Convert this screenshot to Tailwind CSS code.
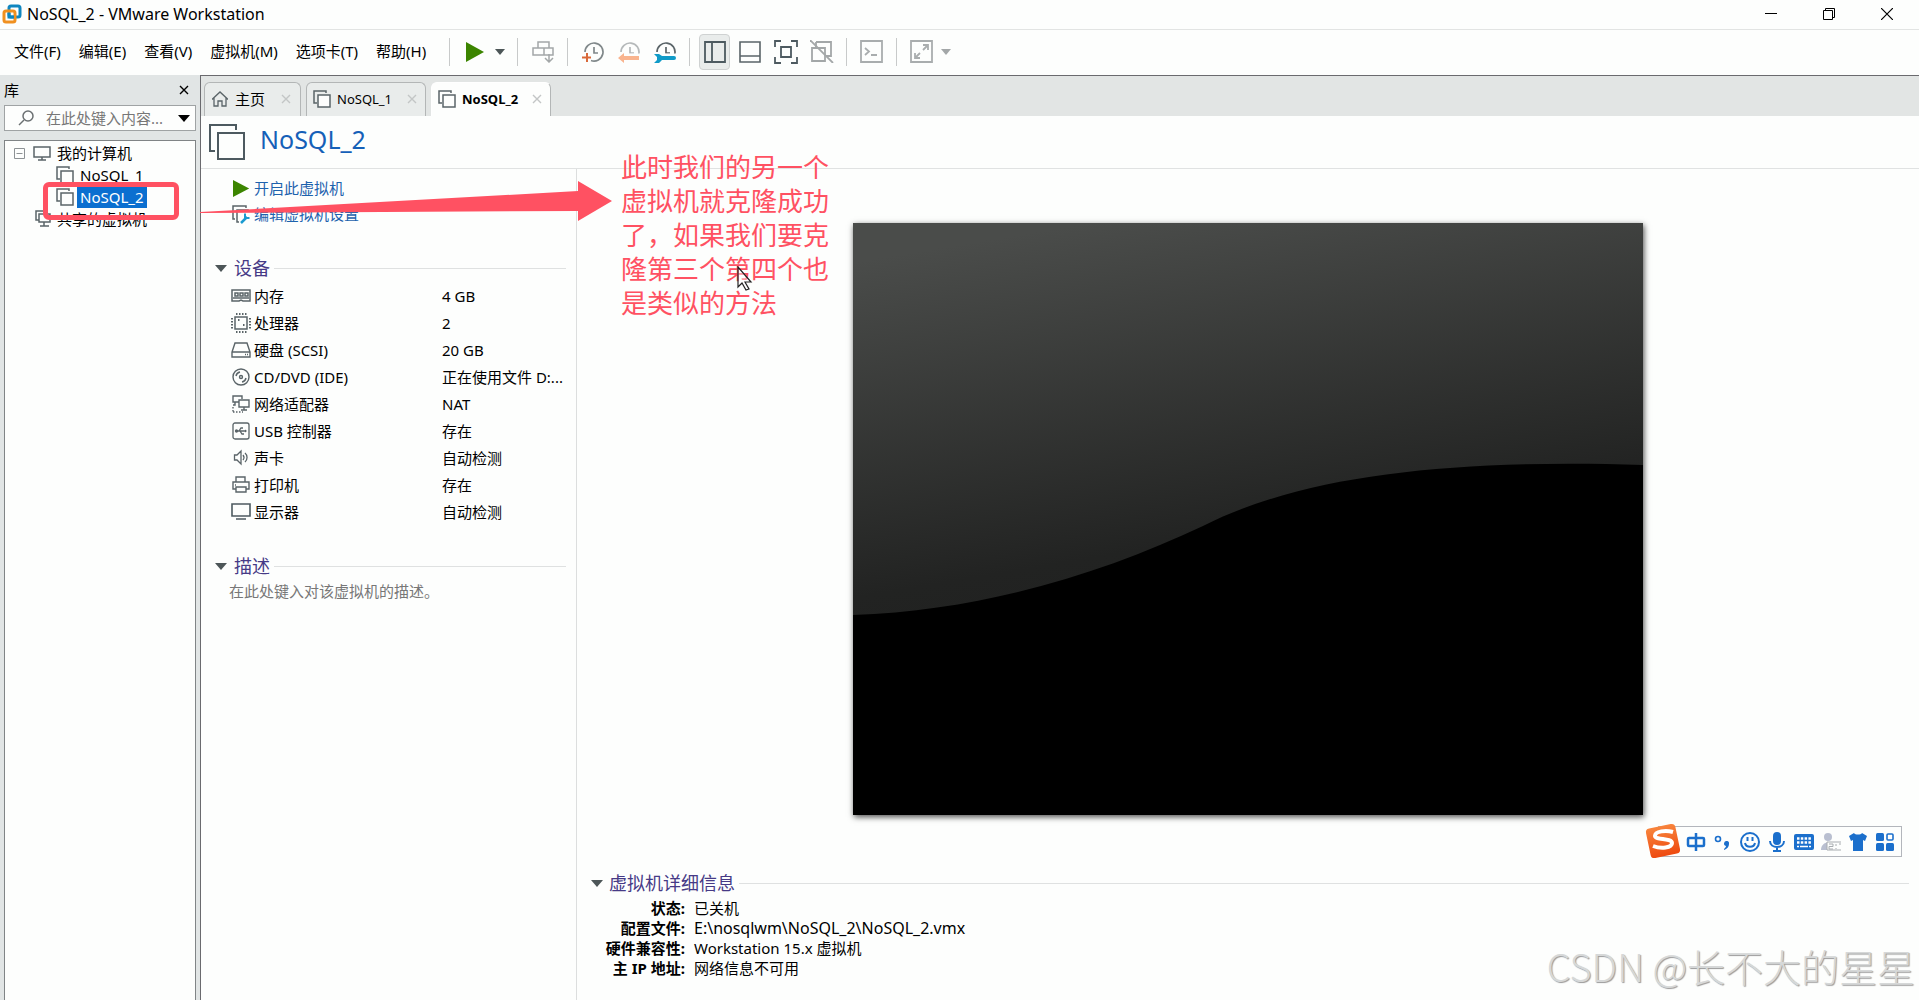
<!DOCTYPE html>
<html lang="zh-CN">
<head>
<meta charset="utf-8">
<title>NoSQL_2 - VMware Workstation</title>
<script src="https://cdn.jsdelivr.net/npm/@tailwindcss/browser@4"></script>
</head>
<body class="relative flex h-screen flex-col overflow-hidden bg-[#fdfefd] font-['Noto_Sans','Noto_Sans_CJK_SC',sans-serif] text-[15px] leading-5 text-black">

<svg class="hidden">
  <symbol id="vm" viewBox="0 0 18 18"><path d="M4 13H1V1h12v2" fill="none" stroke="#5a6468" stroke-width="1.5"/><rect x="5" y="5" width="12" height="12" fill="#fdfefd" stroke="#5a6468" stroke-width="1.5"/></symbol>
  <symbol id="x" viewBox="0 0 10 10"><path d="M1 1l8 8M9 1l-8 8" fill="none" stroke="currentColor" stroke-width="1.4"/></symbol>
  <symbol id="caret" viewBox="0 0 12 7"><path d="M0 0h12L6 7z" fill="currentColor"/></symbol>
  <symbol id="play" viewBox="0 0 20 20"><path d="M1 0v20l18-10z" fill="#3c8500"/></symbol>
  <symbol id="clock" viewBox="0 0 22 22"><path d="M3 11a9 9 0 1 1 6 8.500M12 6v6h4" fill="none" stroke="currentColor" stroke-width="1.7"/></symbol>
</svg>

<header class="flex h-[30px] shrink-0 items-center border-b border-[#e2e4e3] pb-px pl-[2px] text-[16px]">
  <svg class="mr-[5px] h-5 w-5" viewBox="0 0 20 20" fill="none" stroke-width="3"><rect x="7" y="2" width="11" height="11" rx="2" stroke="#0f86c0"/><rect x="2" y="7" width="11" height="11" rx="2" stroke="#f09020"/><path d="M7 9v4h5" stroke="#0f86c0"/></svg>
  <h1 class="flex-1">NoSQL_2 - VMware Workstation</h1>
  <div class="flex gap-[46px] pr-[26px]">
    <button aria-label="最小化" class="h-3 w-3"><svg viewBox="0 0 12 12"><path d="M0 5.500h12" stroke="#000"/></svg></button>
    <button aria-label="还原" class="h-3 w-3"><svg viewBox="0 0 12 12" fill="none" stroke="#000"><path d="M2.500 2.500v-2h9v9h-2"/><path d="M.5 2.500h9v9h-9z"/></svg></button>
    <button aria-label="关闭" class="h-3 w-3"><svg viewBox="0 0 12 12"><path d="M0 0l12 12M12 0L0 12" stroke="#000" stroke-width="1.200"/></svg></button>
  </div>
</header>

<nav class="flex h-[45px] shrink-0 items-center pb-[2px] pl-[14px]">
  <div class="flex w-[435px] gap-[18px] pb-px whitespace-nowrap">
    <button>文件(F)</button><button>编辑(E)</button><button>查看(V)</button><button>虚拟机(M)</button><button>选项卡(T)</button><button>帮助(H)</button>
  </div>
  <i class="h-7 w-px bg-[#c8caca]"></i>
  <button aria-label="开机" class="ml-[15px] flex items-center gap-[10px] text-[#4d5658]"><svg class="h-5 w-5"><use href="#play"/></svg><svg class="h-[6px] w-[10px]"><use href="#caret"/></svg></button>
  <i class="ml-[12px] h-7 w-px bg-[#c8caca]"></i>
  <button aria-label="发送组合键" class="ml-[14px]"><svg class="h-[22px] w-[22px]" viewBox="0 0 22 22" fill="none" stroke="#a3a7a8" stroke-width="1.500"><path d="M6 1h11v6H6zM1 7h11v7H1zM12 7h9v7h-9zM17 13v7M13 17l4 4 4-4"/></svg></button>
  <i class="ml-[13px] h-7 w-px bg-[#c8caca]"></i>
  <div class="ml-[14px] flex gap-[14px]">
    <button aria-label="拍摄快照"><svg class="h-[22px] w-[22px]" viewBox="0 0 22 22"><use href="#clock" color="#80888a"/><path d="M5 12v9M0 16.500h9" stroke="#fdfefd" stroke-width="4"/><path d="M5 12v9M0 16.500h9" stroke="#d9693a" stroke-width="2"/></svg></button>
    <button aria-label="恢复快照"><svg class="h-[22px] w-[22px]" viewBox="0 0 22 22"><use href="#clock" color="#b5b9ba"/><path d="M0 12.500h22V22H0z" fill="#fdfefd"/><path d="M0 17l6-5v3h15v4H6v3z" fill="#f9b48e"/></svg></button>
    <button aria-label="管理快照"><svg class="h-[22px] w-[22px]" viewBox="0 0 22 22"><use href="#clock" color="#5a6468"/><path d="M0 12.500h22V22H0z" fill="#fdfefd"/><path d="M0 13h5l3 2h12a2 2 0 0 1 0 4H8l-3 3H0l3-3v-3z" fill="#109bc8"/></svg></button>
  </div>
  <i class="ml-[13px] h-7 w-px bg-[#c8caca]"></i>
  <div class="ml-[9px] flex items-center gap-[9px]">
    <button aria-label="显示库" class="flex h-9 w-[31px] items-center justify-center rounded border border-[#cfd2d2] bg-[#e9eceb]"><svg class="h-[22px] w-[22px]" viewBox="0 0 22 22" fill="none" stroke="#4d5a60" stroke-width="1.800"><path d="M1 1h20v20H1zM8 1v20"/></svg></button>
    <button aria-label="显示缩略图"><svg class="h-[22px] w-[22px]" viewBox="0 0 22 22" fill="none" stroke="#5a6468" stroke-width="1.600"><path d="M1 1h20v20H1zM1 15h20"/></svg></button>
    <button aria-label="全屏" class="ml-1"><svg class="h-6 w-6" viewBox="0 0 24 24" fill="none" stroke="#4d5a60" stroke-width="1.800"><path d="M1 7V1h6M17 1h6v6M23 17v6h-6M7 23H1v-6M7 7h10v10H7z"/></svg></button>
    <button aria-label="Unity" class="ml-[3px]"><svg class="h-[23px] w-6" viewBox="0 0 24 23" fill="none" stroke="#a3a7a8" stroke-width="1.800"><path d="M6 2h15v14h-5M2 8h13v13H2zM6 2v6"/><path d="M0 0l23 23" /></svg></button>
  </div>
  <i class="ml-[12px] h-7 w-px bg-[#c8caca]"></i>
  <button aria-label="控制台" class="ml-[13px]"><svg class="h-[23px] w-[23px]" viewBox="0 0 23 23" fill="none" stroke="#a9adae" stroke-width="1.800"><path d="M1 1h21v21H1z"/><path d="M5 8l4 3.500L5 15M11 15h6"/></svg></button>
  <i class="ml-[13px] h-7 w-px bg-[#c8caca]"></i>
  <button aria-label="拉伸" class="ml-[13px] flex items-center gap-2 text-[#a3a7a8]"><svg class="h-[23px] w-[23px]" viewBox="0 0 23 23" fill="none" stroke="#a9adae" stroke-width="1.800"><path d="M1 1h21v21H1zM13 5h5v5M5 13v5h5M18 5l-5 5M5 18l5-5"/></svg><svg class="h-[6px] w-[10px]"><use href="#caret"/></svg></button>
</nav>

<div class="flex min-h-0 flex-1">
  <aside class="flex w-[200px] shrink-0 flex-col bg-[#e1e5e5] pr-1 pl-1">
    <div class="flex h-[30px] items-center justify-between pr-[7px]"><h2>库</h2><button aria-label="关闭库"><svg class="h-[10px] w-[10px]"><use href="#x"/></svg></button></div>
    <label class="flex h-[26px] shrink-0 items-center border border-[#9fa3a4] bg-[#fdfefd] pr-[5px] pl-[13px]">
      <svg class="h-4 w-4 shrink-0" viewBox="0 0 16 16" fill="none" stroke="#6b7072" stroke-width="1.500"><circle cx="10" cy="6" r="5"/><path d="M6 10l-5 5"/></svg>
      <input aria-label="搜索" placeholder="在此处键入内容..." class="ml-3 w-0 flex-1 placeholder:text-[#777]">
      <svg class="h-[7px] w-3"><use href="#caret"/></svg>
    </label>
    <ul class="mt-[9px] flex-1 border border-b-0 border-[#808486] bg-[#fdfefd] pt-px leading-[22px] whitespace-nowrap">
      <li class="flex h-[22px] items-center pl-[9px]"><svg class="mr-2 h-[11px] w-[11px]" viewBox="0 0 11 11" fill="none" stroke="#8d9295"><path d="M.5.5h10v10H.5zM2.500 5.500h6"/></svg><svg class="mr-[6px] h-[15px] w-[18px]" viewBox="0 0 18 15" fill="none" stroke="#5a6468" stroke-width="1.500"><path d="M1 1h16v10H1zM9 11v3M5 14h8"/></svg>我的计算机</li>
      <li class="flex h-[22px] items-center pl-[51px]"><svg class="mr-[3px] h-[18px] w-[18px]"><use href="#vm"/></svg><span class="px-[3px]">NoSQL_1</span></li>
      <li class="flex h-[22px] items-center pl-[51px]"><svg class="mr-[3px] h-[18px] w-[18px]"><use href="#vm"/></svg><span class="bg-[#0b6fd0] px-[3px] leading-[21px] text-white">NoSQL_2</span></li>
      <li class="flex h-[22px] items-center pl-[30px]"><svg class="mr-[6px] h-[18px] w-4" viewBox="0 0 16 18" fill="none" stroke="#5a6468" stroke-width="1.500"><path d="M4 10H1V1h10v2M4 4h11v8H4zM9 12v4M5 16h9"/></svg>共享的虚拟机</li>
    </ul>
  </aside>

  <main class="flex min-w-0 flex-1 flex-col border-t border-l border-[#6a6a6e]">
    <div class="flex h-10 shrink-0 items-end gap-[5px] bg-[#e2e5e4] pl-[3px] text-[13px]">
      <button class="flex h-[34px] w-[97px] items-center rounded-t-md border border-b-0 border-[#b3b6b6] bg-[#e9eceb] pb-[2px] pl-[7px] text-[15px]"><svg class="mr-[7px] h-4 w-4" viewBox="0 0 16 16" fill="none" stroke="#5a6468" stroke-width="1.300"><path d="M0 8.500L8 1l8 7.500M2 7v8h4v-5h4v5h4V7"/></svg>主页<svg class="ml-4 h-[10px] w-[10px] text-[#c3c6c6]"><use href="#x"/></svg></button>
      <button class="flex h-[34px] w-[120px] items-center rounded-t-md border border-b-0 border-[#b3b6b6] bg-[#e9eceb] pb-[2px] pl-[6px]"><svg class="mr-[6px] h-[18px] w-[18px]"><use href="#vm"/></svg>NoSQL_1<svg class="mr-[8px] ml-auto h-[10px] w-[10px] text-[#c3c6c6]"><use href="#x"/></svg></button>
      <button class="flex h-[34px] w-[120px] items-center rounded-t-md border border-b-0 border-[#b3b6b6] border-l-white border-t-white bg-[#fdfefd] pb-[2px] pl-[6px] font-bold"><svg class="mr-[6px] h-[18px] w-[18px]"><use href="#vm"/></svg>NoSQL_2<svg class="mr-[8px] ml-auto h-[10px] w-[10px] text-[#c3c6c6]"><use href="#x"/></svg></button>
    </div>
    <div class="flex h-[53px] shrink-0 items-start border-b border-[#e0e2e2] pt-[7px] pl-2">
      <svg class="mt-px h-9 w-9" viewBox="0 0 36 36" fill="none" stroke="#4d5a60" stroke-width="2"><path d="M6 27H1V1h26v5M9 9h26v26H9z"/></svg>
      <h2 class="ml-[15px] text-[25px] leading-8 text-[#1560b8]">NoSQL_2</h2>
    </div>
    <div class="flex min-h-0 flex-1">
      <section class="w-[376px] shrink-0 border-r border-[#dcdede] pr-[10px]">
        <div class="flex flex-col gap-[6px] pt-[9px] pl-[31px] text-[#1d62ad]">
          <a href="#" class="flex h-5 items-center"><svg class="mr-[3px] ml-px h-[17px] w-[18px]" viewBox="0 0 20 20" preserveAspectRatio="none"><path d="M0 0v20l18-10z" fill="#3c8500"/></svg>开启此虚拟机</a>
          <a href="#" class="flex h-5 items-center"><svg class="mr-1 h-[19px] w-[18px]" viewBox="0 0 18 19" fill="none" stroke="#5a6468" stroke-width="1.500"><path d="M3 14H1V1h13v2M7 17H5V5h11v2"/><path d="M9 18l6-6" stroke="#1a9bd0" stroke-width="2.500"/><path d="M13 8.500v4.500h4.500" stroke="#1a9bd0" stroke-width="2"/></svg>编辑虚拟机设置</a>
        </div>
        <h3 class="mt-[34px] flex h-5 items-center pl-[14px] text-[18px] text-[#463a86]"><svg class="mr-[7px] h-[7px] w-3 text-[#4d5658]"><use href="#caret"/></svg>设备<i class="ml-1 h-px flex-1 bg-[#dfe1e1]"></i></h3>
        <table class="mt-1 ml-[30px] w-[336px] table-fixed whitespace-nowrap">
          <tr class="h-[27px]"><td class="w-[211px]"><span class="flex items-center gap-[3px]"><svg class="h-5 w-5" viewBox="0 0 20 20" fill="none" stroke="#5a6468" stroke-width="1.500"><path d="M1 4h18v11h-7l-2-1-2 1H1zM4 7h3v3H4zM9 7h3v3H9zM14 7h3v3h-3zM2 12h16"/></svg>内存</span></td><td>4 GB</td></tr>
          <tr class="h-[27px]"><td><span class="flex items-center gap-[3px]"><svg class="h-5 w-5" viewBox="0 0 20 20" fill="none" stroke="#5a6468" stroke-width="1.500"><path d="M4 4h12v12H4z"/><path d="M5 1h11M5 19h11M1 5v11M19 5v11" stroke-width="2" stroke-dasharray="1.500 1.500"/><path d="M7 7h1.500M12 12h1.500" stroke-width="2"/></svg>处理器</span></td><td>2</td></tr>
          <tr class="h-[27px]"><td><span class="flex items-center gap-[3px]"><svg class="h-5 w-5" viewBox="0 0 20 20" fill="none" stroke="#5a6468" stroke-width="1.400"><path d="M4 3h12l3 9v5H1v-5zM1 12h18M14 14.500h1M16 14.500h1"/></svg>硬盘 (SCSI)</span></td><td>20 GB</td></tr>
          <tr class="h-[27px]"><td><span class="flex items-center gap-[3px]"><svg class="h-5 w-5" viewBox="0 0 20 20" fill="none" stroke="#5a6468" stroke-width="1.400"><circle cx="10" cy="10" r="8"/><circle cx="10" cy="10" r="1.500"/><path d="M5 9a5 5 0 0 1 4-4M15 11a5 5 0 0 1-4 4"/></svg>CD/DVD (IDE)</span></td><td>正在使用文件 D:...</td></tr>
          <tr class="h-[27px]"><td><span class="flex items-center gap-[3px]"><svg class="h-5 w-5" viewBox="0 0 20 20" fill="none" stroke="#5a6468" stroke-width="1.400"><path d="M8 8H2V2h9v3M8 6h10v7H8zM13 13v3M10 16h6M4 8v3H2"/><path d="M2 13v5M2 18h10" stroke-dasharray="1.500 1.500"/></svg>网络适配器</span></td><td>NAT</td></tr>
          <tr class="h-[27px]"><td><span class="flex items-center gap-[3px]"><svg class="h-5 w-5" viewBox="0 0 20 20" fill="none" stroke="#5a6468" stroke-width="1.300"><rect x="2" y="2" width="16" height="16" rx="2"/><path d="M5 10h10M8 10l2-3h2M9 10l2 3h2"/><circle cx="5.500" cy="10" r="1" fill="#5a6468"/><path d="M14 8.500l2 1.500-2 1.500z" fill="#5a6468" stroke="none"/></svg>USB 控制器</span></td><td>存在</td></tr>
          <tr class="h-[27px]"><td><span class="flex items-center gap-[3px]"><svg class="h-5 w-5" viewBox="0 0 20 20" fill="none" stroke="#5a6468" stroke-width="1.300"><path d="M3.500 7H6l4-4v13l-4-4H3.500zM12 7a4 4 0 0 1 0 5M14 5a6 6 0 0 1 0 9"/></svg>声卡</span></td><td>自动检测</td></tr>
          <tr class="h-[27px]"><td><span class="flex items-center gap-[3px]"><svg class="h-5 w-5" viewBox="0 0 20 20" fill="none" stroke="#5a6468" stroke-width="1.400"><path d="M5 7V2h9v5M5 14H2V7h16v7h-3M5 12h10v5H5zM4 10h1"/></svg>打印机</span></td><td>存在</td></tr>
          <tr class="h-[27px]"><td><span class="flex items-center gap-[3px]"><svg class="h-5 w-5" viewBox="0 0 20 20" fill="none" stroke="#4d5a60" stroke-width="1.600"><path d="M1 2h18v12H1zM5 17h10"/></svg>显示器</span></td><td>自动检测</td></tr>
        </table>
        <h3 class="mt-[31px] flex h-5 items-center pl-[14px] text-[18px] text-[#463a86]"><svg class="mr-[7px] h-[7px] w-3 text-[#4d5658]"><use href="#caret"/></svg>描述<i class="ml-1 h-px flex-1 bg-[#dfe1e1]"></i></h3>
        <p class="mt-[5px] pl-[28px] text-[#777]">在此处键入对该虚拟机的描述。</p>
      </section>
      <section class="flex min-w-0 flex-1 flex-col">
        <div class="flex min-h-0 flex-1 items-center justify-center pb-1">
          <svg class="w-[59%] max-w-[790px] shadow-[1px_2px_6px_rgba(0,0,0,.7)]" viewBox="0 0 790 592"><defs><linearGradient id="g" x1=".3" y1="0" x2=".5" y2=".9"><stop offset="0" stop-color="#4a4c4a"/><stop offset=".6" stop-color="#222322"/><stop offset="1" stop-color="#1c1d1c"/></linearGradient></defs><path d="M0 0h790v592H0z" fill="url(#g)"/><path d="M0 392C130 388 250 350 350 303C450 252 600 236 790 242V592H0z"/></svg>
        </div>
        <div class="h-[127px] shrink-0 pr-[10px] pl-[14px]">
          <h3 class="flex h-5 items-center text-[18px] text-[#463a86]"><svg class="mr-[6px] h-[7px] w-3 text-[#4d5658]"><use href="#caret"/></svg>虚拟机详细信息<i class="ml-1 h-px flex-1 bg-[#dfe1e1]"></i></h3>
          <dl class="mt-[5px] grid grid-cols-[94px_1fr] gap-x-[9px] leading-5">
            <dt class="text-right font-bold whitespace-nowrap">状态:</dt><dd>已关机</dd>
            <dt class="text-right font-bold whitespace-nowrap">配置文件:</dt><dd class="text-[16px] leading-5">E:\nosqlwm\NoSQL_2\NoSQL_2.vmx</dd>
            <dt class="text-right font-bold whitespace-nowrap">硬件兼容性:</dt><dd>Workstation 15.x 虚拟机</dd>
            <dt class="text-right font-bold whitespace-nowrap">主 IP 地址:</dt><dd>网络信息不可用</dd>
          </dl>
        </div>
      </section>
    </div>
  </main>
</div>

<!-- Annotations -->
<div class="absolute top-[182px] left-[43px] h-[38px] w-[136px] rounded-md border-[5px] border-[#ff5162]"></div>
<svg class="absolute top-[181px] left-[200px] h-10 w-[412px]" viewBox="0 0 412 40"><path d="M0 31L378 10V0l34 20-34 20V30L0 32z" fill="#ff5162"/></svg>
<p class="absolute top-[150px] left-[621px] w-[212px] text-[26px] leading-[34px] text-[#ff5162]">此时我们的另一个虚拟机就克隆成功了，如果我们要克隆第三个第四个也是类似的方法</p>
<svg class="absolute top-[266px] left-[737px] h-[25px] w-4" viewBox="0 0 16 25"><path d="M1 1v20l4-4 4 7 3-1-4-7h6z" fill="#fff" fill-opacity=".4" stroke="#222" stroke-width="1.200"/></svg>

<!-- Input method bar -->
<div class="absolute right-[17px] bottom-[143px] flex h-[31px] w-[244px] items-center gap-[7px] border border-[#b3b6bc] bg-[#fdfefd] pl-[27px] text-[#1b6fcc]">
  <svg class="absolute -top-1 -left-[14px] h-9 w-9" viewBox="0 0 36 36"><defs><linearGradient id="s" x2="0" y2="1"><stop stop-color="#f8843c"/><stop offset="1" stop-color="#ee4a10"/></linearGradient></defs><rect x="3" y="3" width="30" height="30" rx="4" fill="url(#s)" transform="rotate(-12 18 18)"/><path d="M28 9c-7-2-18-1-18 4 0 4 17 2 17 7 0 5-11 6-19 3" fill="none" stroke="#fff" stroke-width="4"/></svg>
  <svg class="h-5 w-5" viewBox="0 0 20 20" fill="none" stroke="currentColor" stroke-width="2.500"><rect x="2" y="6" width="16" height="8" rx="1"/><path d="M10 1v18"/></svg>
  <svg class="h-5 w-5" viewBox="0 0 20 20"><circle cx="5" cy="7" r="2.500" fill="none" stroke="currentColor" stroke-width="1.600"/><path d="M11 18c3-1 5-3 5-6a2.500 2.500 0 1 0-3 2c0 1-1 2-2 3z" fill="currentColor"/></svg>
  <svg class="h-5 w-5" viewBox="0 0 20 20" fill="none" stroke="currentColor" stroke-width="2"><circle cx="10" cy="10" r="9"/><path d="M7.500 5v4M12.500 5v4M5 11c1 5 9 5 10 0"/></svg>
  <svg class="h-5 w-5" viewBox="0 0 20 20" fill="none" stroke="currentColor" stroke-width="2"><rect x="7" y="1" width="6" height="11" rx="3" fill="currentColor"/><path d="M3 9c0 8 14 8 14 0M10 15v4M6 19h8"/></svg>
  <svg class="h-5 w-5" viewBox="0 0 20 20"><rect y="2" width="20" height="16" rx="2" fill="currentColor"/><path d="M3 6.500h14M3 10.500h14" stroke="#fff" stroke-width="2.500" stroke-dasharray="2.500 1.300"/><path d="M3 14.500h2M6 14.500h8M15 14.500h2" stroke="#fff" stroke-width="1.500"/></svg>
  <svg class="h-5 w-5 text-[#b9bfd0]" viewBox="0 0 20 20"><circle cx="7" cy="5" r="4" fill="currentColor"/><path d="M0 18c0-10 14-10 14 0z" fill="currentColor"/><path d="M6 10h14v8H6z" fill="#fdfefd"/><path d="M20 10H6v8h14M8 12h4v2.500H8V17h4M15 12v2M15 16v1M18 12h2" stroke="#a8acb0" fill="none"/></svg>
  <svg class="h-5 w-5" viewBox="0 0 20 20"><path d="M6 1c1 2 7 2 8 0l5 3-2 5-2-1v11H5V8L3 9 1 4z" fill="currentColor"/></svg>
  <svg class="h-5 w-5" viewBox="0 0 20 20" fill="currentColor"><rect x="1" y="1" width="8" height="8" rx="1.500"/><rect x="1" y="11" width="8" height="8" rx="1.500"/><rect x="11" y="11" width="8" height="8" rx="1.500"/><rect x="12" y="2" width="6" height="6" rx="1" fill="none" stroke="currentColor" stroke-width="1.600"/></svg>
</div>
<p class="absolute right-1 bottom-[10px] font-['Noto_Sans_CJK_SC',sans-serif] text-[38px] leading-12 font-light whitespace-nowrap text-[#d6d8d8] [text-shadow:1px_1px_1px_#999]">CSDN @长不大的星星</p>
</body>
</html>
